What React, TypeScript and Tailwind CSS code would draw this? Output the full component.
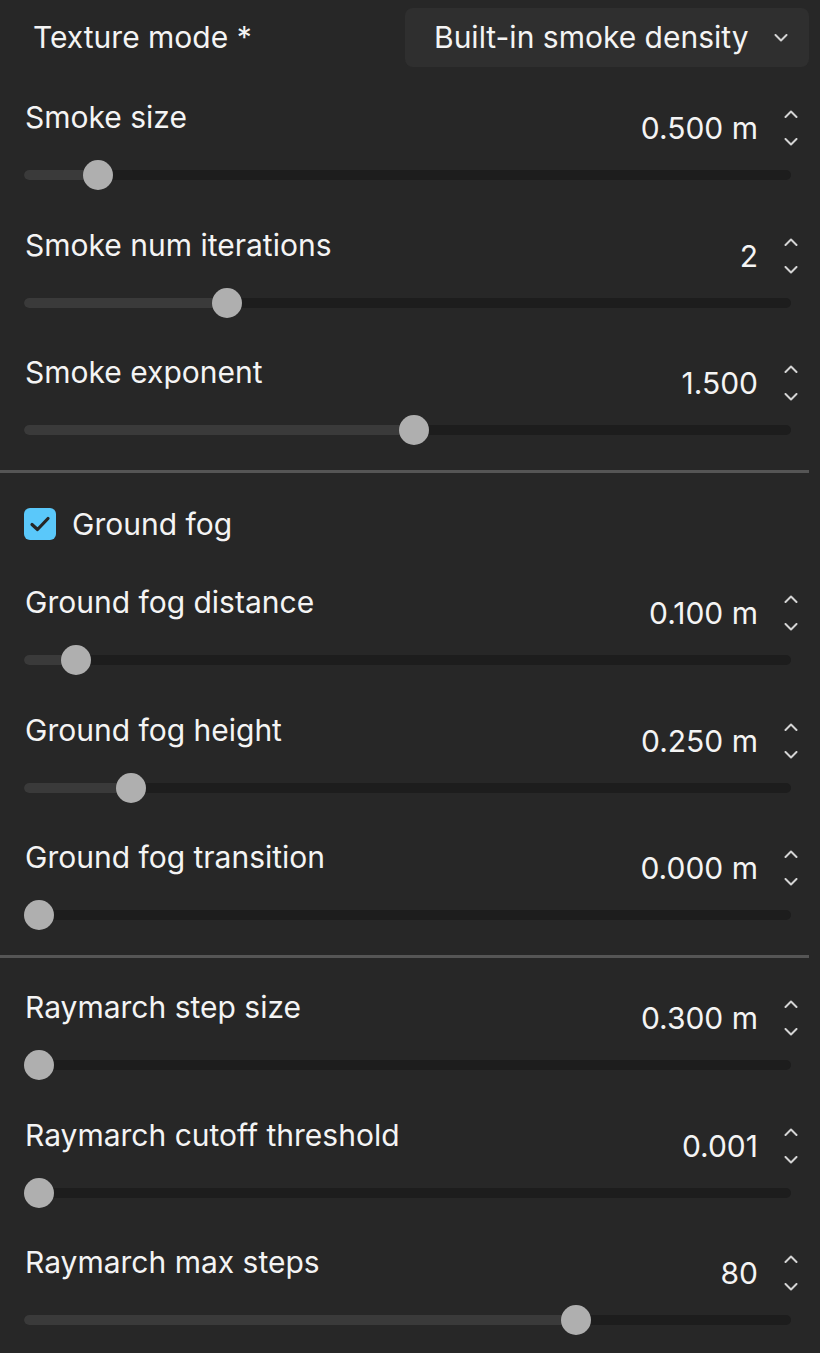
import React from 'react'

/* ─── Data ───────────────────────────────────────────────────────────────── */

interface SliderRow {
  label: string
  value: string
  thumb: number // thumb centre, px from page left
}

const smokeRows: SliderRow[] = [
  { label: 'Smoke size', value: '0.500 m', thumb: 98 },
  { label: 'Smoke num iterations', value: '2', thumb: 227 },
  { label: 'Smoke exponent', value: '1.500', thumb: 414 },
]

const fogRows: SliderRow[] = [
  { label: 'Ground fog distance', value: '0.100 m', thumb: 76 },
  { label: 'Ground fog height', value: '0.250 m', thumb: 131 },
  { label: 'Ground fog transition', value: '0.000 m', thumb: 39 },
]

const rayRows: SliderRow[] = [
  { label: 'Raymarch step size', value: '0.300 m', thumb: 39 },
  { label: 'Raymarch cutoff threshold', value: '0.001', thumb: 39 },
  { label: 'Raymarch max steps', value: '80', thumb: 576 },
]

const TRACK_LEFT = 24

/* ─── Pieces ─────────────────────────────────────────────────────────────── */

function Chevron({ up = false }: { up?: boolean }) {
  return (
    <svg width="14" height="8" viewBox="0 0 14 8" fill="none">
      <path
        d={up ? 'M1.5 7 L7 1.5 L12.5 7' : 'M1.5 1 L7 6.5 L12.5 1'}
        stroke="#d4d4d4"
        strokeWidth="2"
        strokeLinecap="round"
        strokeLinejoin="round"
      />
    </svg>
  )
}

function Row({ row }: { row: SliderRow }) {
  const fill = row.thumb - TRACK_LEFT
  return (
    <div className="flex flex-col">
      {/* Header */}
      <div className="flex h-[60px] items-start justify-between pl-[25px] pr-[22px]">
        <span className="leading-[34px]">{row.label}</span>
        <div className="mt-[8px] flex items-center gap-[26px]">
          <span className="leading-[40px]">{row.value}</span>
          <div className="flex h-[40px] flex-col items-center justify-between py-[2px]">
            <Chevron up />
            <Chevron />
          </div>
        </div>
      </div>

      {/* Slider */}
      <div className="relative ml-[24px] flex h-[30px] w-[767px] items-center">
        <div className="h-[10px] w-full rounded-full bg-[#1d1d1d]" />
        <div
          className="absolute left-0 top-[10px] h-[10px] rounded-l-full bg-[#3a3a3a]"
          style={{ width: fill }}
        />
        <div
          className="absolute top-0 h-[30px] w-[30px] rounded-full bg-[#afafaf]"
          style={{ left: fill - 15 }}
        />
      </div>
    </div>
  )
}

function Divider() {
  return <div className="h-[3px] w-[809px] bg-[#555555]" />
}

/* ─── Component ──────────────────────────────────────────────────────────── */

export default function App() {
  return (
    <div
      className="h-[1353px] w-[820px] overflow-hidden bg-[#272727] text-[30px] text-[#f4f4f4]"
      style={{ fontFamily: 'Inter, "Noto Sans", sans-serif' }}
    >
      {/* Texture mode select */}
      <div className="mt-[8px] flex h-[59px] w-[809px] items-center justify-between">
        <span className="pl-[33px]">Texture mode *</span>
        <div className="flex h-[59px] w-[404px] items-center justify-between rounded-[8px] bg-[#2f2f2f] pl-[29px] pr-[21px]">
          <span>Built-in smoke density</span>
          <Chevron />
        </div>
      </div>

      {/* Smoke */}
      <div className="mt-[33px] flex flex-col gap-[37.5px]">
        {smokeRows.map((r) => (
          <Row key={r.label} row={r} />
        ))}
      </div>

      <div className="mt-[25px]">
        <Divider />
      </div>

      {/* Ground fog */}
      <div className="mt-[35px] flex h-[32px] items-center gap-[16px] pl-[24px]">
        <div className="flex h-[32px] w-[32px] items-center justify-center rounded-[6px] bg-[#5ac8fa]">
          <svg width="22" height="18" viewBox="0 0 22 18" fill="none">
            <path
              d="M3 9.5 L8.5 14.5 L19 3.5"
              stroke="#262626"
              strokeWidth="3.2"
              strokeLinecap="round"
              strokeLinejoin="round"
            />
          </svg>
        </div>
        <span>Ground fog</span>
      </div>

      <div className="mt-[45px] flex flex-col gap-[37.5px]">
        {fogRows.map((r) => (
          <Row key={r.label} row={r} />
        ))}
      </div>

      <div className="mt-[25px]">
        <Divider />
      </div>

      {/* Raymarch */}
      <div className="mt-[32px] flex flex-col gap-[37.5px]">
        {rayRows.map((r) => (
          <Row key={r.label} row={r} />
        ))}
      </div>
    </div>
  )
}
